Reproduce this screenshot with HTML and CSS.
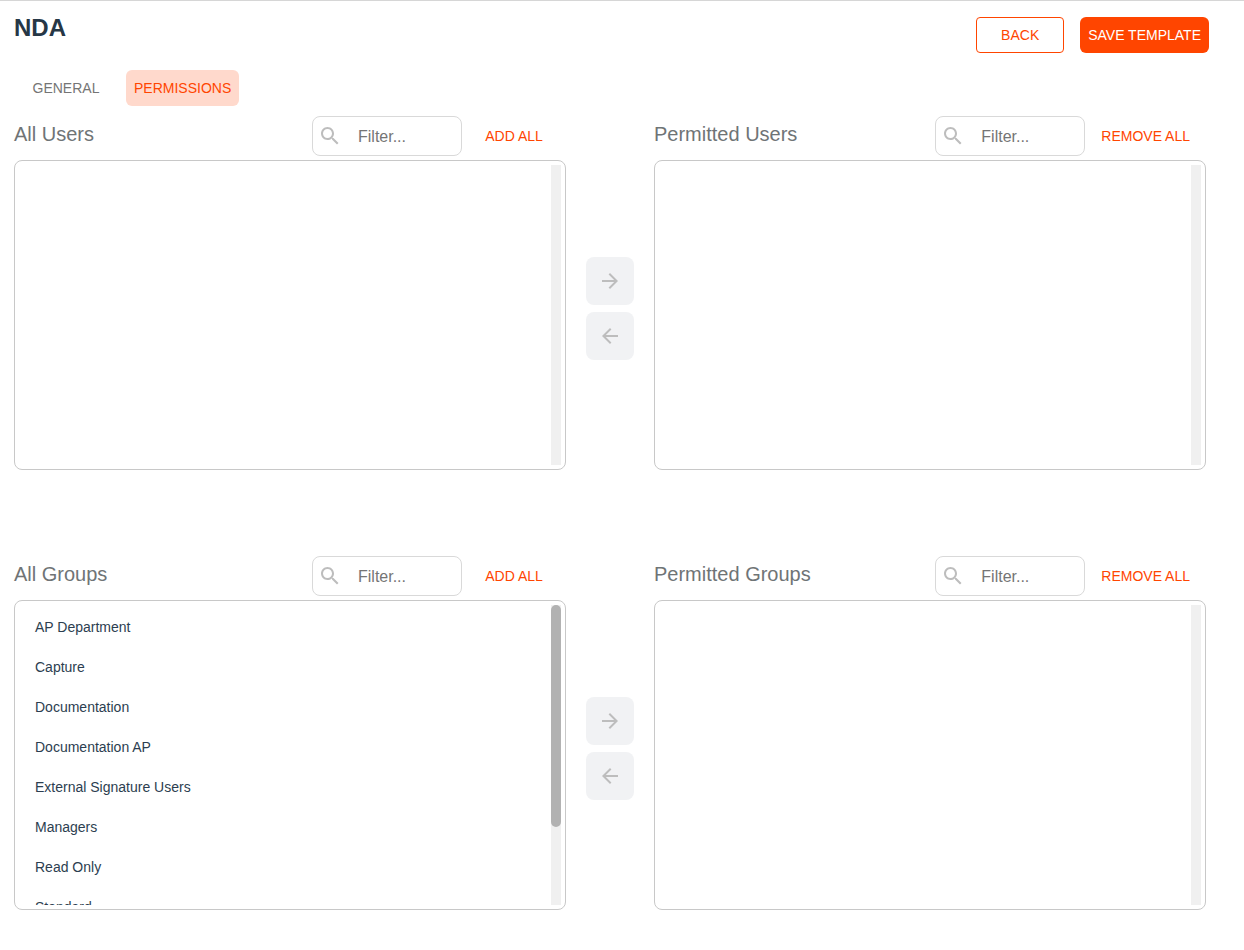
FILE: index.html
```html
<!DOCTYPE html>
<html lang="en">
<head>
    <meta charset="UTF-8">
    <meta name="viewport" content="width=device-width, initial-scale=1.0">
    <title>NDA - Permissions</title>
    <link rel="stylesheet" href="styles.css">
</head>
<body>
    <svg class="sprite" aria-hidden="true">
        <symbol id="icon-search" viewBox="0 0 24 24">
            <path d="M15.5 14h-.79l-.28-.27C15.41 12.59 16 11.11 16 9.5 16 5.91 13.09 3 9.5 3S3 5.91 3 9.5 5.91 16 9.5 16c1.61 0 3.09-.59 4.23-1.57l.27.28v.79l5 4.99L20.49 19l-4.99-5zm-6 0C7.01 14 5 11.99 5 9.5S7.01 5 9.5 5 14 7.01 14 9.5 11.99 14 9.5 14z"/>
        </symbol>
        <symbol id="icon-right" viewBox="0 0 24 24">
            <path d="M12 4l-1.41 1.41L16.17 11H4v2h12.17l-5.58 5.59L12 20l8-8z"/>
        </symbol>
        <symbol id="icon-left" viewBox="0 0 24 24">
            <path d="M20 11H7.83l5.59-5.59L12 4l-8 8 8 8 1.41-1.41L7.83 13H20v-2z"/>
        </symbol>
    </svg>

    <header class="header">
        <h1>NDA</h1>
        <div class="actions">
            <button type="button" class="btn btn-outline">BACK</button>
            <button type="button" class="btn btn-primary">SAVE TEMPLATE</button>
        </div>
    </header>

    <nav class="tabs">
        <button type="button" class="btn tab">GENERAL</button>
        <button type="button" class="btn tab tab-active">PERMISSIONS</button>
    </nav>

    <main class="content">
        <section class="transfer">
            <div class="column">
                <div class="toolbar">
                    <h2>All Users</h2>
                    <div class="filter">
                        <svg class="icon"><use href="#icon-search"/></svg>
                        <input type="text" placeholder="Filter..." aria-label="Filter all users">
                    </div>
                    <button type="button" class="btn btn-link">ADD ALL</button>
                </div>
                <div class="panel">
                    <ul class="list"></ul>
                    <div class="track"></div>
                </div>
            </div>
            <div class="arrows">
                <button type="button" class="arrow" aria-label="Add user" disabled><svg class="icon"><use href="#icon-right"/></svg></button>
                <button type="button" class="arrow" aria-label="Remove user" disabled><svg class="icon"><use href="#icon-left"/></svg></button>
            </div>
            <div class="column">
                <div class="toolbar">
                    <h2>Permitted Users</h2>
                    <div class="filter">
                        <svg class="icon"><use href="#icon-search"/></svg>
                        <input type="text" placeholder="Filter..." aria-label="Filter permitted users">
                    </div>
                    <button type="button" class="btn btn-link">REMOVE ALL</button>
                </div>
                <div class="panel">
                    <ul class="list"></ul>
                    <div class="track"></div>
                </div>
            </div>
        </section>

        <section class="transfer">
            <div class="column">
                <div class="toolbar">
                    <h2>All Groups</h2>
                    <div class="filter">
                        <svg class="icon"><use href="#icon-search"/></svg>
                        <input type="text" placeholder="Filter..." aria-label="Filter all groups">
                    </div>
                    <button type="button" class="btn btn-link">ADD ALL</button>
                </div>
                <div class="panel">
                    <ul class="list">
                        <li>AP Department</li>
                        <li>Capture</li>
                        <li>Documentation</li>
                        <li>Documentation AP</li>
                        <li>External Signature Users</li>
                        <li>Managers</li>
                        <li>Read Only</li>
                        <li>Standard</li>
                    </ul>
                    <div class="track"><div class="thumb"></div></div>
                </div>
            </div>
            <div class="arrows">
                <button type="button" class="arrow" aria-label="Add group" disabled><svg class="icon"><use href="#icon-right"/></svg></button>
                <button type="button" class="arrow" aria-label="Remove group" disabled><svg class="icon"><use href="#icon-left"/></svg></button>
            </div>
            <div class="column">
                <div class="toolbar">
                    <h2>Permitted Groups</h2>
                    <div class="filter">
                        <svg class="icon"><use href="#icon-search"/></svg>
                        <input type="text" placeholder="Filter..." aria-label="Filter permitted groups">
                    </div>
                    <button type="button" class="btn btn-link">REMOVE ALL</button>
                </div>
                <div class="panel">
                    <ul class="list"></ul>
                    <div class="track"></div>
                </div>
            </div>
        </section>
    </main>
</body>
</html>
```
FILE: styles.css
```css
* {
    box-sizing: border-box;
}
body {
    margin: 0;
    border-top: 1px solid #d6d6d6;
    background-color: #fff;
    color: #2c3e50;
    font-family: "Liberation Sans", Arial, sans-serif;
    font-size: 14px;
}
h1, h2, ul {
    margin: 0;
    padding: 0;
    list-style: none;
}
.sprite {
    display: none;
}
.icon {
    width: 24px;
    height: 24px;
    fill: #bdbdbd;
    flex: none;
}
.header {
    display: flex;
    justify-content: space-between;
    padding: 12px 35px 0 14px;
}
h1 {
    font-size: 24px;
    line-height: 30px;
    color: #263746;
}
.actions {
    display: flex;
    gap: 16px;
    padding-top: 4px;
}
.btn {
    min-width: 88px;
    height: 36px;
    padding: 0 8px;
    border: none;
    border-radius: 6px;
    background: none;
    color: #ff4500;
    font-family: inherit;
    font-size: 14px;
    cursor: pointer;
}
.btn-outline {
    border: 1px solid #ff4500;
    border-radius: 4px;
}
.btn-primary {
    background-color: #ff4500;
    color: #fff;
}
.tabs {
    display: flex;
    gap: 16px;
    padding: 17px 22px 10px;
}
.tab {
    color: #757575;
}
.tab-active {
    background-color: #ffd9cc;
    color: #ff4500;
}
.content {
    padding: 0 38px 40px 14px;
    display: grid;
    gap: 86px;
}
.transfer {
    display: grid;
    grid-template-columns: 1fr 48px 1fr;
    gap: 20px;
}
.toolbar {
    display: flex;
    align-items: center;
    gap: 8px;
    height: 40px;
    margin-bottom: 4px;
    padding-right: 8px;
}
h2 {
    flex: 1;
    padding-bottom: 4px;
    font-size: 20px;
    font-weight: normal;
    line-height: 24px;
    color: #6f7476;
}
.filter {
    display: flex;
    align-items: center;
    width: 150px;
    height: 40px;
    padding-left: 5px;
    border: 1px solid #d9d9d9;
    border-radius: 8px;
}
.filter input {
    flex: 1;
    min-width: 0;
    height: 100%;
    padding: 2px 0 0 16px;
    border: none;
    outline: none;
    background: none;
    font-family: inherit;
    font-size: 16px;
}
.filter input::placeholder {
    color: #757575;
}
.panel {
    display: flex;
    height: 310px;
    padding: 4px;
    border: 1px solid #c8c8c8;
    border-radius: 8px;
}
.list {
    flex: 1;
    padding: 2px 0;
    overflow-x: hidden;
    overflow-y: auto;
    scrollbar-width: none;
}
.list li {
    padding-left: 16px;
    line-height: 40px;
}
.track {
    width: 10px;
    background-color: #f0f0f0;
}
.thumb {
    height: 74%;
    border-radius: 5px;
    background-color: #b2b2b2;
}
.arrows {
    display: flex;
    flex-direction: column;
    gap: 7px;
    padding-top: 141px;
}
.arrow {
    display: flex;
    align-items: center;
    justify-content: center;
    height: 48px;
    padding: 0;
    border: none;
    border-radius: 8px;
    background-color: #f1f2f4;
}
```
